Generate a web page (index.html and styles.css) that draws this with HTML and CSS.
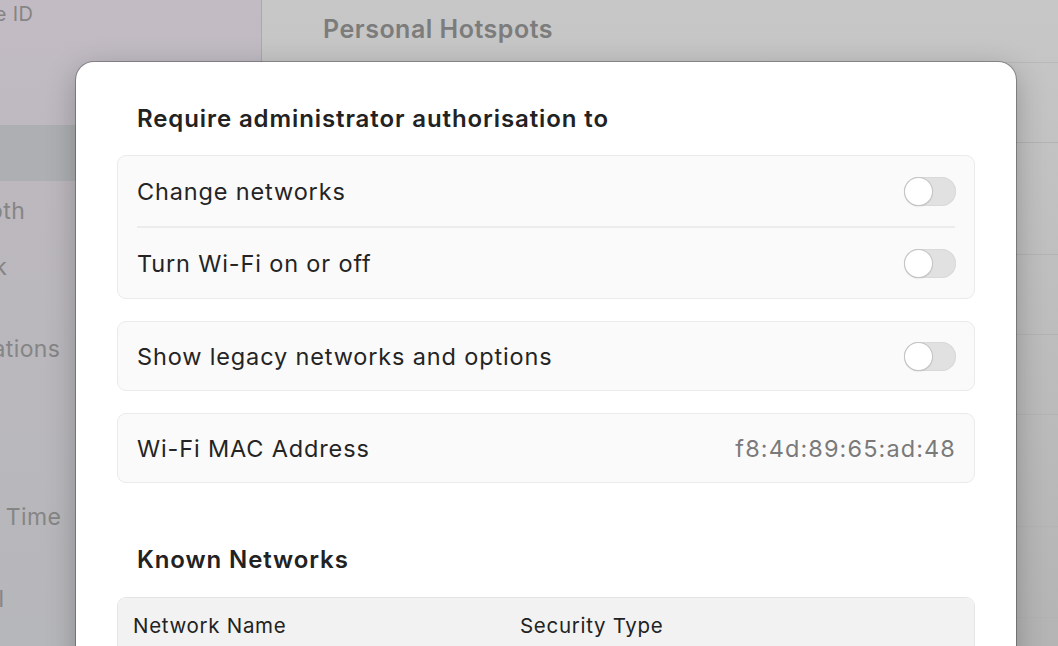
FILE: index.html
```html
<!DOCTYPE html>
<html lang="en">
<head>
	<meta charset="UTF-8">
	<title>Wi-Fi</title>
	<link rel="stylesheet" href="styles.css">
</head>
<body>
	<div id="window">
		<div class="sidebar">
			<div class="account">Apple ID</div>
			<ul class="menu">
				<li class="active">Wi-Fi</li>
				<li>Bluetooth</li>
				<li class="far">Network</li>
			</ul>
			<ul class="menu">
				<li>Notifications</li>
				<li>Sound</li>
				<li>Focus</li>
				<li class="near">Screen Time</li>
			</ul>
			<ul class="menu">
				<li class="mid">General</li>
			</ul>
		</div>
		<div class="main">
			<div class="main-title">Personal Hotspots</div>
			<ul class="main-list">
				<li class="r1"></li>
				<li class="r2"></li>
				<li class="r1"></li>
				<li class="r1"></li>
				<li class="r2"></li>
				<li class="r3"></li>
				<li class="r1"></li>
			</ul>
		</div>
	</div>

	<div class="sheet">
		<div class="sheet-title">Require administrator authorisation to</div>
		<div class="group">
			<div class="row">
				<span>Change networks</span>
				<i class="toggle"></i>
			</div>
			<div class="row">
				<span>Turn Wi-Fi on or off</span>
				<i class="toggle"></i>
			</div>
		</div>
		<div class="group single">
			<div class="row">
				<span>Show legacy networks and options</span>
				<i class="toggle"></i>
			</div>
		</div>
		<div class="group single">
			<div class="row">
				<span>Wi-Fi MAC Address</span>
				<span class="value">f8:4d:89:65:ad:48</span>
			</div>
		</div>
		<div class="sheet-title known">Known Networks</div>
		<div class="table">
			<div class="table-head">
				<span>Network Name</span>
				<span>Security Type</span>
			</div>
		</div>
	</div>
</body>
</html>
```
FILE: styles.css
```css
*{margin: 0;padding: 0;box-sizing: border-box;}
html,body{
	height: 646px;
	overflow: hidden;
}
body{
	font-family: Inter, "Noto Sans", sans-serif;
	color: #222;
	position: relative;
}
li{
	list-style: none;
}
#window{
	display: flex;
	height: 646px;
}
/* sidebar (dimmed behind the sheet) */
.sidebar{
	width: 262px;
	flex-shrink: 0;
	overflow: hidden;
	background: linear-gradient(180deg, #c2bbc4 0%, #bcb8be 30%, #b6b7ba 100%);
	border-right: 1px solid #a9a9ab;
	color: #858585;
	font-size: 23px;
	letter-spacing: 0.4px;
}
.sidebar .account{
	height: 28px;
	line-height: 28px;
	margin: 0 0 97px -50px;
	font-size: 20px;
}
.sidebar .menu{
	margin-bottom: 26px;
}
.sidebar .menu li{
	height: 56px;
	line-height: 60px;
	margin-left: -82px;
	white-space: nowrap;
}
.sidebar .menu li.far{
	margin-left: -88px;
}
.sidebar .menu li.mid{
	margin-left: -83px;
}
.sidebar .menu li.near{
	margin-left: -80px;
}
.sidebar .menu li.active{
	margin-left: 0;
	line-height: 56px;
	background-color: #aeafb2;
	color: transparent;
}
/* main pane */
.main{
	flex: 1;
	background: linear-gradient(180deg, #c7c7c7 0%, #bfbfbf 40%, #b4b4b4 100%);
}
.main-title{
	height: 63px;
	padding: 14px 0 0 61px;
	font-size: 25px;
	font-weight: 600;
	letter-spacing: 0.5px;
	color: #7c7c7c;
	border-bottom: 1px solid #b9b9b9;
}
.main-list li{
	border-bottom: 1px solid #b3b3b3;
}
.main-list .r1{ height: 80px; }
.main-list .r2{ height: 112px; }
.main-list .r3{ height: 91px; }
/* sheet */
.sheet{
	position: absolute;
	left: 76px;
	top: 62px;
	width: 940px;
	height: 640px;
	padding: 42px 41px 0;
	background-color: #fff;
	border-radius: 18px;
	box-shadow: 0 0 0 1px rgba(0,0,0,.28), 0 8px 30px rgba(0,0,0,.25);
}
.sheet-title{
	height: 30px;
	line-height: 30px;
	padding-left: 20px;
	margin-bottom: 21px;
	font-size: 24px;
	font-weight: 600;
	letter-spacing: 0.9px;
	color: #222;
}
.sheet-title.known{
	margin-top: 62px;
	margin-bottom: 22px;
	letter-spacing: 0.9px;
}
.group{
	margin-bottom: 22px;
	padding: 0 19px;
	background-color: #fafafa;
	border: 1px solid #ebebeb;
	border-radius: 9px;
}
.group .row{
	display: flex;
	align-items: center;
	justify-content: space-between;
	height: 70px;
	font-size: 23.5px;
	letter-spacing: 0.85px;
	color: #242424;
}
.group .row + .row{
	height: 72px;
	border-top: 2px solid #ececec;
}
.group.single .row{
	height: 68px;
}
.group .row .value{
	color: #7a7a7a;
	letter-spacing: 1.1px;
	margin-right: -1px;
}
.toggle{
	position: relative;
	display: block;
	width: 52px;
	height: 29px;
	margin-right: -1px;
	border-radius: 15px;
	background-color: #e1e1e1;
	box-shadow: inset 0 0 0 1px #d9d9d9;
}
.toggle:after{
	content: "";
	position: absolute;
	left: 1px;
	top: 1px;
	width: 27px;
	height: 27px;
	border-radius: 50%;
	background-color: #fff;
	box-shadow: 0 0 0 1px #c4c4c4, 0 1px 2px rgba(0,0,0,.2);
}
.table{
	height: 120px;
	background-color: #fff;
	border: 1px solid #e4e4e4;
	border-radius: 9px;
	overflow: hidden;
}
.table-head{
	display: grid;
	grid-template-columns: 387px 1fr;
	height: 54px;
	align-items: center;
	padding-left: 15px;
	background-color: #f2f2f2;
	font-size: 20.5px;
	letter-spacing: 0.7px;
	color: #222;
}
```
